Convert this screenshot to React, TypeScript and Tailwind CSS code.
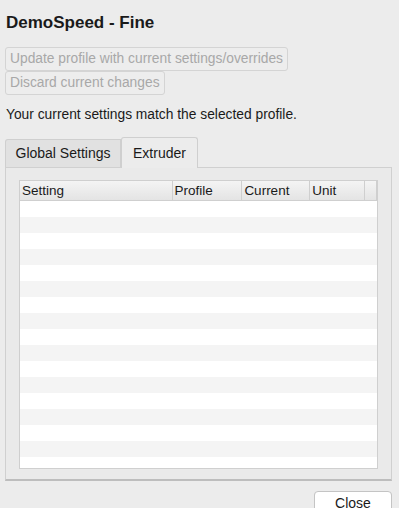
import React from "react";

const COLS = [
  { label: "Setting", w: "w-[153px]" },
  { label: "Profile", w: "w-[70px]" },
  { label: "Current", w: "w-[68px]" },
  { label: "Unit", w: "w-[55px]" },
];

export default function App() {
  const rows = Array.from({ length: 17 });
  return (
    <div
      className="h-[508px] w-[399px] overflow-hidden bg-[#ececec] text-[#1a1a1a]"
      style={{ fontFamily: '"Liberation Sans", Arial, sans-serif' }}
    >
      <h1 className="pl-[6px] pt-[12px] text-[17px] font-bold leading-[22px]">DemoSpeed - Fine</h1>

      <div className="mt-[13px] flex flex-col items-start pl-[5px]">
        <button className="h-[24px] rounded-[3px] border border-[#d4d4d4] bg-[#ededed] px-[4px] text-[13.8px] leading-[22px] text-[#a8a8a8]">
          Update profile with current settings/overrides
        </button>
        <button className="h-[24px] rounded-[3px] border border-[#d4d4d4] bg-[#ededed] px-[4px] text-[13.8px] leading-[22px] text-[#a8a8a8]">
          Discard current changes
        </button>
      </div>

      <p className="mt-[11px] pl-[6px] text-[13.8px] leading-[18px]">
        Your current settings match the selected profile.
      </p>

      <div className="mt-[13px] pl-[5px] pr-[7px]">
        <div className="flex items-end">
          <div className="flex h-[28px] w-[116px] items-center justify-center rounded-tl-[3px] border border-b-0 border-[#cfcfcf] bg-[#e1e1e1] text-[14px]">
            Global Settings
          </div>
          <div className="relative z-10 -mb-px flex h-[31px] w-[77px] items-center justify-center rounded-t-[3px] border border-b-0 border-[#cfcfcf] bg-[#ececec] text-[14px]">
            Extruder
          </div>
        </div>
        <div className="h-[314px] border border-[#d0d0d0] border-b-[#bdbdbd] border-b-2 bg-[#eaeaea] pl-[13px] pr-[13px] pt-[12px]">
          <div className="h-[289px] overflow-hidden border border-[#cfcfcf] bg-white">
            <div className="flex h-[20px] border-b border-[#cfcfcf] bg-gradient-to-b from-[#f4f4f4] to-[#e4e4e4] text-[13.5px] leading-[19px]">
              {COLS.map((c) => (
                <div key={c.label} className={`${c.w} border-r border-[#cfcfcf] pl-[2px]`}>
                  {c.label}
                </div>
              ))}
              <div className="w-[12px] border-r border-[#cfcfcf]" />
            </div>
            {rows.map((_, i) => (
              <div key={i} className={`h-[16px] ${i % 2 ? "bg-[#f4f4f4]" : "bg-white"}`} />
            ))}
          </div>
        </div>
      </div>

      <div className="mt-[10px] flex justify-end pr-[7px]">
        <button className="h-[24px] w-[78px] rounded-[4px] border border-[#c4c4c4] bg-white text-[14px] leading-[22px] shadow-[0_1px_0_#bcbcbc]">
          Close
        </button>
      </div>
    </div>
  );
}
